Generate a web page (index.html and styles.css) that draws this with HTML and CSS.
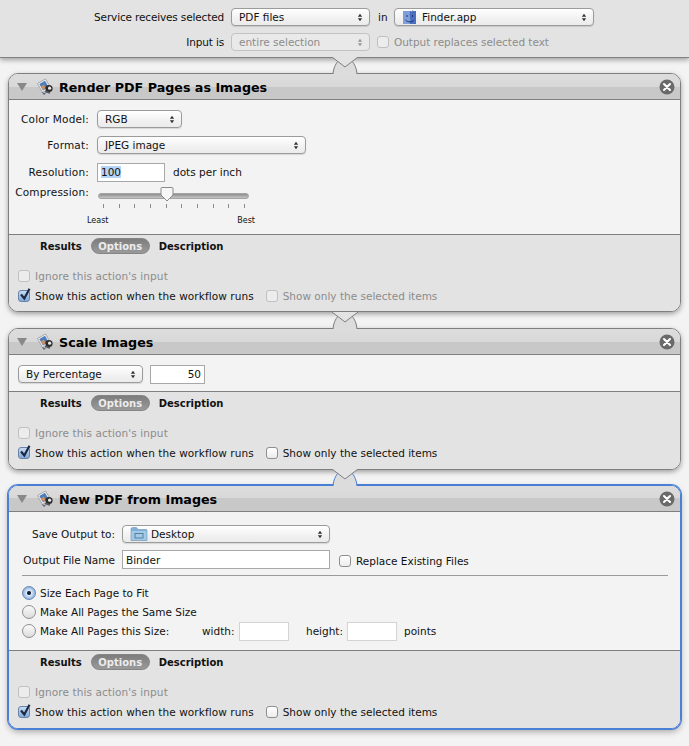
FILE: index.html
```html
<!DOCTYPE html>
<html lang="en">
<head>
    <meta charset="UTF-8">
    <title>Service workflow</title>
    <link rel="stylesheet" href="styles.css">
</head>
<body>
    <svg class="defs" width="0" height="0">
        <defs>
            <symbol id="updown" viewBox="0 0 7 10">
                <path d="M3.5 0.5 L6 4 H1 Z M3.5 9.5 L1 6 H6 Z" fill="#333"/>
            </symbol>
            <symbol id="robot" viewBox="0 0 18 18">
                <path d="M1.5 5.5 L9.5 1 L14.5 9.5 L6.5 14.5 Z" fill="#f2f2f2" stroke="#8d8d8d" stroke-width=".7"/>
                <path d="M3.3 6 L9 2.8 L12.6 9 L7 12.5 Z" fill="#4f7dbb"/>
                <path d="M5 8.5 L8 6.6 L9.4 10.4 L7 11.8 Z" fill="#cf8f5e"/>
                <path d="M5.5 14 L10 15.5 L8 17 Z" fill="#5d6a80"/>
                <circle cx="13" cy="10.5" r="3.6" fill="#2c2c2c"/>
                <circle cx="13.6" cy="10.2" r="1.6" fill="#e8e8e8"/>
                <path d="M9 13.5 L14 15" stroke="#555" stroke-width="1.4"/>
            </symbol>
            <symbol id="close" viewBox="0 0 16 16">
                <circle cx="8" cy="8" r="7.5" fill="#6a6a6a"/>
                <path d="M5 5 L11 11 M11 5 L5 11" stroke="#fff" stroke-width="2.1" stroke-linecap="round"/>
            </symbol>
            <symbol id="tick" viewBox="0 0 14 14">
                <path d="M3 6.5 L6.3 10.5 L11.5 0.8" fill="none" stroke="#1f2a44" stroke-width="2.2"/>
            </symbol>
            <symbol id="notch" viewBox="0 0 26 17">
                <path d="M1 17 C1.5 11 3 8 6 4 H20 C23 8 24.5 11 25 17" fill="#dcdcdc" stroke="currentColor"/>
                <path d="M0 0 L13 10 L26 0 Z" fill="#e3e3e3"/>
                <path d="M0 0 L13 10 L26 0" fill="none" stroke="#7f7f7f"/>
            </symbol>
        </defs>
    </svg>

    <div class="topbar">
        <div class="top-row">
            <span class="top-label">Service receives selected</span>
            <div class="select w139"><span class="select-text">PDF files</span><svg class="arrows"><use href="#updown"/></svg></div>
            <span class="in-label">in</span>
            <div class="select w200">
                <span class="select-text">
                    <svg class="small-icon" viewBox="0 0 15 15">
                        <rect x="1" y="1" width="13" height="13" fill="#7f9fdb"/>
                        <path d="M8 1 H14 V14 H8 C9 10 7 6 8 1 Z" fill="#4a6fc0"/>
                        <path d="M5 5 V7 M10.5 5 V7 M3.5 10 C6 12.5 10 12.5 12 10" stroke="#20336a" fill="none"/>
                        <path d="M11 0 L9.5 2" stroke="#9aa" fill="none"/>
                    </svg>
                    Finder.app
                </span>
                <svg class="arrows"><use href="#updown"/></svg>
            </div>
        </div>
        <div class="top-row second">
            <span class="top-label">Input is</span>
            <div class="select w139 off"><span class="select-text">entire selection</span><svg class="arrows"><use href="#updown"/></svg></div>
            <label class="check off"><span class="box"></span>Output replaces selected text</label>
        </div>
    </div>

    <div class="stack">
        <section class="card">
            <svg class="notch"><use href="#notch"/></svg>
            <header class="card-head">
                <span class="disclosure"></span>
                <svg class="robot"><use href="#robot"/></svg>
                <h2>Render PDF Pages as Images</h2>
                <svg class="close"><use href="#close"/></svg>
            </header>
            <div class="card-body render-body">
                <div class="field"><span class="field-label">Color Model:</span><div class="select w85"><span class="select-text">RGB</span><svg class="arrows"><use href="#updown"/></svg></div></div>
                <div class="field"><span class="field-label">Format:</span><div class="select w209"><span class="select-text">JPEG image</span><svg class="arrows"><use href="#updown"/></svg></div></div>
                <div class="field res-row"><span class="field-label">Resolution:</span><div class="input w68"><span class="selected">100</span></div><span>dots per inch</span></div>
                <div class="field slider-field">
                    <span class="field-label">Compression:</span>
                    <div class="slider">
                        <div class="track"></div>
                        <svg class="thumb" viewBox="0 0 14 15"><path d="M1 1.5 Q1 .5 2 .5 H12 Q13 .5 13 1.5 V8 L7 14 L1 8 Z" fill="#f6f6f6" stroke="#8a8a8a"/></svg>
                        <div class="ticks"><i></i><i></i><i></i><i></i><i></i><i></i><i></i><i></i><i></i><i></i></div>
                        <div class="slider-ends"><span>Least</span><span>Best</span></div>
                    </div>
                </div>
            </div>
            <footer class="card-foot first-foot">
                <div class="tabs"><span>Results</span><span class="pill">Options</span><span>Description</span></div>
                <label class="check off"><span class="box"></span>Ignore this action's input</label>
                <div class="check-row">
                    <label class="check"><span class="box on"><svg><use href="#tick"/></svg></span>Show this action when the workflow runs</label>
                    <label class="check off"><span class="box"></span>Show only the selected items</label>
                </div>
            </footer>
        </section>

        <section class="card">
            <svg class="notch"><use href="#notch"/></svg>
            <header class="card-head">
                <span class="disclosure"></span>
                <svg class="robot"><use href="#robot"/></svg>
                <h2>Scale Images</h2>
                <svg class="close"><use href="#close"/></svg>
            </header>
            <div class="card-body scale-body">
                <div class="select w125"><span class="select-text">By Percentage</span><svg class="arrows"><use href="#updown"/></svg></div>
                <div class="input w55 right">50</div>
            </div>
            <footer class="card-foot">
                <div class="tabs"><span>Results</span><span class="pill">Options</span><span>Description</span></div>
                <label class="check off"><span class="box"></span>Ignore this action's input</label>
                <div class="check-row">
                    <label class="check"><span class="box on"><svg><use href="#tick"/></svg></span>Show this action when the workflow runs</label>
                    <label class="check"><span class="box"></span>Show only the selected items</label>
                </div>
            </footer>
        </section>

        <section class="card active">
            <svg class="notch"><use href="#notch"/></svg>
            <header class="card-head">
                <span class="disclosure"></span>
                <svg class="robot"><use href="#robot"/></svg>
                <h2>New PDF from Images</h2>
                <svg class="close"><use href="#close"/></svg>
            </header>
            <div class="card-body pdf-body">
                <div class="pdf-row">
                    <span class="pdf-label">Save Output to:</span>
                    <div class="select w208">
                        <span class="select-text">
                            <svg class="small-icon folder" viewBox="0 0 18 16">
                                <path d="M1 3 Q1 1.5 2.5 1.5 H6.5 L8 3.5 H16 Q17 3.5 17 4.5 V14.5 H1 Z" fill="#7fb0d8" stroke="#6a94b8" stroke-width=".6"/>
                                <path d="M1.5 5 H16.5 V14 H1.5 Z" fill="#a3c9e6"/>
                                <rect x="5" y="7.5" width="8" height="4.5" fill="none" stroke="#54809f"/>
                            </svg>
                            Desktop
                        </span>
                        <svg class="arrows"><use href="#updown"/></svg>
                    </div>
                </div>
                <div class="pdf-row name-row">
                    <span class="pdf-label">Output File Name</span>
                    <div class="input w208">Binder</div>
                    <label class="check replace"><span class="box"></span>Replace Existing Files</label>
                </div>
                <hr class="divider">
                <div class="radios">
                    <label class="radio-row"><span class="radio on"></span>Size Each Page to Fit</label>
                    <label class="radio-row"><span class="radio"></span>Make All Pages the Same Size</label>
                    <div class="radio-row">
                        <span class="radio"></span><span class="size-label">Make All Pages this Size:</span>
                        <span class="dim-label">width:</span><div class="input w50 faint"></div>
                        <span class="dim-label second-dim">height:</span><div class="input w50 faint"></div>
                        <span class="points">points</span>
                    </div>
                </div>
            </div>
            <footer class="card-foot">
                <div class="tabs"><span>Results</span><span class="pill">Options</span><span>Description</span></div>
                <label class="check off"><span class="box"></span>Ignore this action's input</label>
                <div class="check-row">
                    <label class="check"><span class="box on"><svg><use href="#tick"/></svg></span>Show this action when the workflow runs</label>
                    <label class="check"><span class="box"></span>Show only the selected items</label>
                </div>
            </footer>
        </section>
    </div>
</body>
</html>
```

FILE: styles.css
```css
/* Global */
body {
    margin: 0;
    width: 689px;
    height: 746px;
    overflow: hidden;
    background: #f3f3f3;
    color: #111;
    font-family: "DejaVu Sans", sans-serif;
    font-size: 10.5px;
    line-height: 14px;
}
.defs {
    position: absolute;
}

/* Top bar */
.topbar {
    height: 58px;
    box-sizing: border-box;
    padding-top: 8px;
    background: #e3e3e3;
    border-bottom: 1px solid #808080;
    box-shadow: 0 2px 5px rgba(0, 0, 0, 0.35);
}
.top-row {
    display: flex;
    align-items: center;
    height: 18px;
}
.top-row.second {
    margin-top: 7px;
}
.top-label {
    width: 224px;
    margin-right: 7px;
    text-align: right;
    letter-spacing: -0.15px;
}
.in-label {
    width: 16px;
    margin-left: 8px;
}
.top-row .check {
    margin-left: 7px;
    letter-spacing: -0.03px;
}

/* Popup buttons */
.select {
    box-sizing: border-box;
    height: 18px;
    display: flex;
    align-items: center;
    justify-content: space-between;
    padding: 0 6px 0 7px;
    background: linear-gradient(to bottom, #ffffff, #f1f1f1 60%, #ebebeb);
    border: 1px solid #9b9b9b;
    border-radius: 4px;
    box-shadow: 0 1px 1px rgba(0, 0, 0, 0.12);
    flex-shrink: 0;
}
.select-text {
    display: flex;
    align-items: center;
    gap: 5px;
}
.arrows {
    width: 6px;
    height: 9px;
}
.select.off {
    color: #8c8c8c;
    border-color: #c2c2c2;
    background: #e9e9e9;
    box-shadow: none;
}
.select.off .arrows {
    opacity: 0.45;
}
.small-icon {
    width: 15px;
    height: 15px;
}
.small-icon.folder {
    width: 18px;
    height: 16px;
    margin-right: -2px;
}
.w85 { width: 85px; }
.w125 { width: 125px; }
.w139 { width: 139px; }
.w200 { width: 200px; }
.w208 { width: 208px; }
.w209 { width: 209px; }

/* Text fields */
.input {
    box-sizing: border-box;
    height: 19px;
    padding: 1px 3px;
    background: #fff;
    border: 1px solid #a8a8a8;
    line-height: 15px;
    flex-shrink: 0;
}
.input.right {
    text-align: right;
}
.input.faint {
    border-color: #d4d4d4;
}
.name-row .input {
    padding-top: 2px;
}
.selected {
    background: #b5d3f5;
}
.w50 { width: 50px; }
.w55 { width: 55px; }
.w68 { width: 68px; }

/* Cards */
.stack {
    display: flex;
    flex-direction: column;
    padding: 15px 8px 0;
}
.card {
    position: relative;
    width: 673px;
    box-sizing: border-box;
    margin-bottom: 16px;
    border: 1px solid #7f7f7f;
    border-radius: 10px;
    color: #111;
    box-shadow: 0 2px 5px rgba(0, 0, 0, 0.35);
}
.card:nth-child(2) {
    margin-bottom: 15px;
}
.card.active {
    border-color: #4a7fd6;
    box-shadow: 0 0 0 1px #4a7fd6, 0 3px 6px rgba(0, 0, 0, 0.3);
}
.notch {
    position: absolute;
    top: -17px;
    left: 323px;
    width: 26px;
    height: 17px;
    z-index: 2;
    color: #7f7f7f;
}
.card.active .notch {
    color: #4a7fd6;
}
.card-head {
    height: 25px;
    display: flex;
    align-items: center;
    padding-left: 8px;
    background: linear-gradient(to bottom, #dddddd 0, #d8d8d8 50%, #c8c8c8 50%, #c8c8c8 100%);
    border-bottom: 1px solid #7f7f7f;
    border-radius: 9px 9px 0 0;
}
.card-head h2 {
    margin: 0 0 0 5px;
    padding-top: 2px;
    font-size: 12.7px;
    font-weight: bold;
    color: #000;
}
.disclosure {
    width: 0;
    height: 0;
    margin-right: 9px;
    border-left: 5px solid transparent;
    border-right: 5px solid transparent;
    border-top: 8px solid #888;
}
.robot {
    width: 18px;
    height: 18px;
}
.close {
    width: 16px;
    height: 16px;
    margin-left: auto;
    margin-right: 5px;
}

/* Card bodies */
.card-body {
    background: #f3f3f3;
    border-bottom: 1px solid #7f7f7f;
}
.render-body {
    height: 135px;
    box-sizing: border-box;
    padding-top: 10px;
}
.field {
    display: flex;
    align-items: center;
    height: 18px;
    margin-bottom: 8px;
    gap: 8px;
}
.field.res-row {
    margin-top: 9px;
    margin-bottom: 7px;
}
.field-label {
    width: 80px;
    text-align: right;
    letter-spacing: 0.18px;
}
.slider-field {
    align-items: flex-start;
}
.slider-field .field-label {
    margin-top: -3px;
}
.slider {
    position: relative;
    width: 151px;
    height: 40px;
    margin-top: 2px;
    margin-left: 1px;
}
.track {
    height: 4px;
    margin-top: 3px;
    background: linear-gradient(to bottom, #8e8e8e, #c6c6c6);
    border: 1px solid #a4a4a4;
    border-radius: 3px;
}
.thumb {
    position: absolute;
    left: 62px;
    top: -3px;
    width: 14px;
    height: 15px;
}
.ticks {
    display: flex;
    justify-content: space-between;
    margin: 5px 4px 0 5px;
}
.ticks i {
    width: 1px;
    height: 4px;
    background: #8a8a8a;
}
.slider-ends {
    display: flex;
    justify-content: space-between;
    margin: 7px -6px 0 -11px;
    font-size: 8px;
    line-height: 12px;
}
.scale-body {
    height: 37px;
    box-sizing: border-box;
    display: flex;
    align-items: flex-start;
    gap: 7px;
    padding: 10px 0 0 9px;
}
.pdf-body {
    height: 139px;
    box-sizing: border-box;
    padding-top: 13px;
}
.pdf-row {
    display: flex;
    align-items: center;
    height: 18px;
}
.name-row {
    height: 19px;
    margin-top: 7px;
}
.pdf-label {
    width: 106px;
    margin-right: 7px;
    text-align: right;
}
.check.replace {
    margin-left: 9px;
    margin-top: 2px;
}
.divider {
    height: 1px;
    margin: 6px 12px 0 13px;
    border: 0;
    background: #9a9a9a;
}
.radios {
    display: flex;
    flex-direction: column;
    gap: 5px;
    margin: 10px 0 0 13px;
}
.radio-row {
    display: flex;
    align-items: center;
    height: 14px;
}
.radio {
    box-sizing: border-box;
    width: 14px;
    height: 14px;
    margin-right: 4px;
    border: 1px solid #8e8e8e;
    border-radius: 50%;
    background: linear-gradient(to bottom, #fafafa, #dcdcdc);
}
.radio.on {
    border-color: #6a8bb5;
    background: radial-gradient(circle, #10203c 0, #10203c 1.5px, #dfeaf7 2.5px, #8fb3de 6px);
}
.size-label {
    width: 162px;
}
.dim-label {
    width: 37px;
}
.second-dim {
    width: 41px;
    margin-left: 17px;
}
.points {
    margin-left: 7px;
}

/* Footer area with tabs and checkboxes */
.card-foot {
    height: 77px;
    box-sizing: border-box;
    padding: 3px 0 0 9px;
    background: #e3e3e3;
    border-radius: 0 0 9px 9px;
}
.first-foot {
    height: 76px;
}
.tabs {
    display: flex;
    align-items: flex-start;
    gap: 9px;
    height: 16px;
    margin-left: 22px;
    margin-bottom: 15px;
    font-size: 10px;
    font-weight: bold;
    line-height: 17px;
}
.pill {
    width: 59px;
    height: 16px;
    box-sizing: border-box;
    text-align: center;
    color: #ececec;
    background: linear-gradient(to bottom, #7d7d7d, #9a9a9a);
    border: 1px solid #858585;
    border-radius: 8px;
    line-height: 15px;
}
.check {
    display: flex;
    align-items: center;
    height: 14px;
    gap: 5px;
}
.card-foot > .check {
    margin-bottom: 6px;
    letter-spacing: 0.1px;
}
.check-row {
    display: flex;
    gap: 12px;
}
.check-row .check:first-child {
    letter-spacing: 0.08px;
}
.box {
    position: relative;
    box-sizing: border-box;
    width: 12px;
    height: 12px;
    background: linear-gradient(to bottom, #ffffff, #ececec);
    border: 1px solid #8f8f8f;
    border-radius: 3px;
    flex-shrink: 0;
}
.box.on {
    background: linear-gradient(to bottom, #c8dcf2, #80a9da);
    border-color: #6a83a8;
}
.box svg {
    position: absolute;
    left: -1px;
    top: -3px;
    width: 14px;
    height: 14px;
}
.check.off {
    color: #8c8c8c;
}
.check.off .box {
    background: #ececec;
    border-color: #c0c0c0;
}
```
